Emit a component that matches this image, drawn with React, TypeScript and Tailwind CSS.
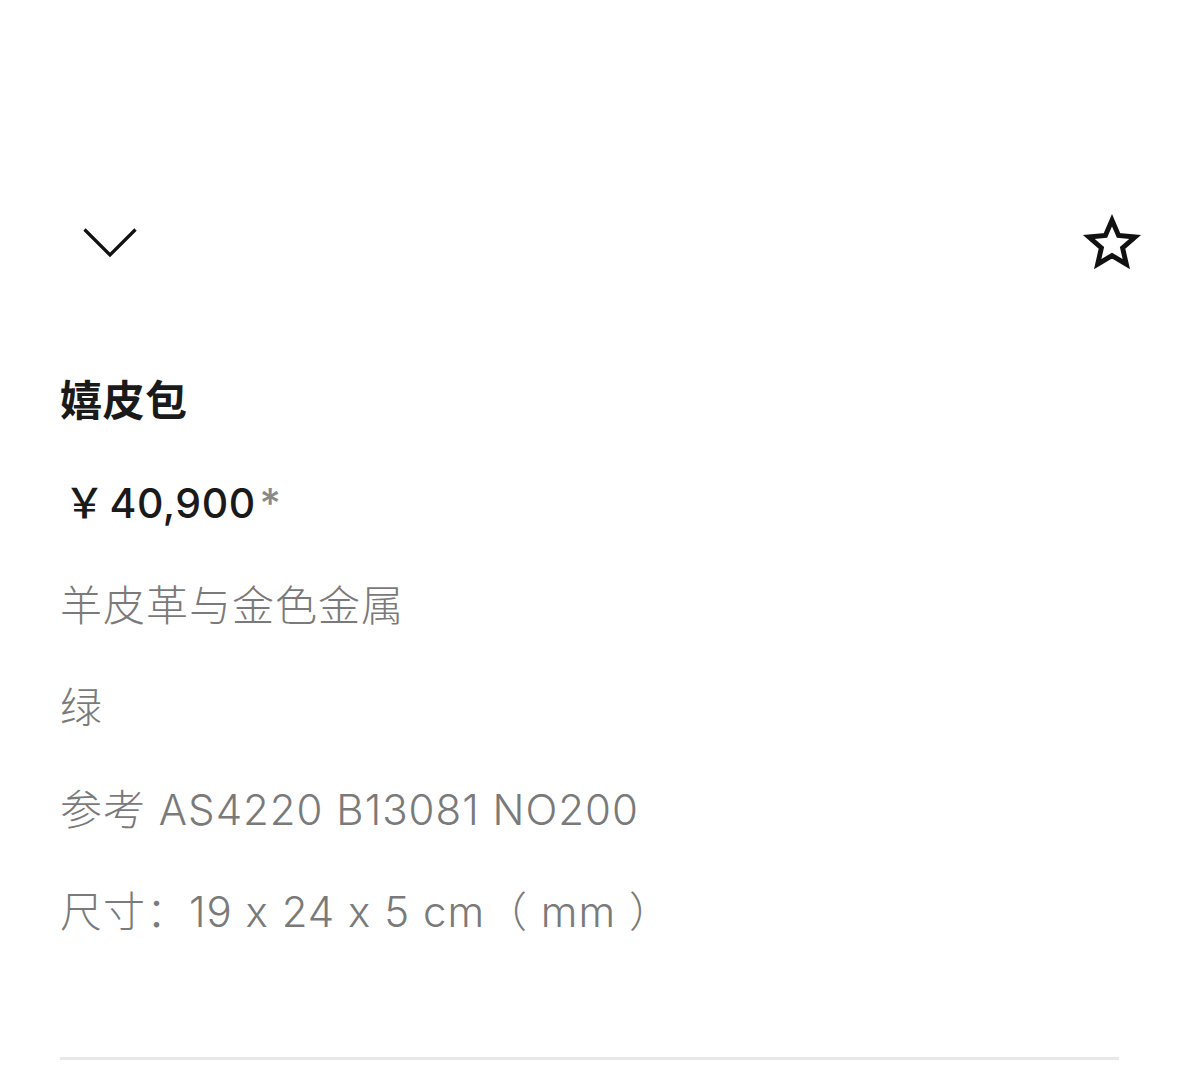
const details = ['羊皮革与金色金属', '绿', '参考 AS4220 B13081 NO200', '尺寸：19 x 24 x 5 cm（ mm ）'];

export default function App() {
  return (
    <div className="min-h-[1083px] w-full bg-white font-['Inter','Noto_Sans_CJK_SC',sans-serif]">
      <div className="flex h-[60px] items-center justify-between pl-[82px] pr-[35px] pt-[213px] box-content">
        <svg viewBox="0 0 56 34" className="h-[34px] w-[56px]" fill="none" stroke="#111" strokeWidth="3.2">
          <path d="M2.5 3.5L28 29L53.5 3.5" />
        </svg>
        <svg viewBox="0 0 24 24" className="h-[62px] w-[62px]" fill="none" stroke="#111" strokeWidth="1.9" strokeLinejoin="miter">
          <path d="M12 3.2l2.55 5.9 6.4.58-4.85 4.22 1.45 6.27L12 16.86l-5.55 3.3 1.45-6.27L3.05 9.68l6.4-.58z" />
        </svg>
      </div>

      <div className="mt-[76px] px-[60px]">
        <h1 className="text-[42px] font-bold leading-[103px] tracking-[0.5px] text-[#1a1a1a]">嬉皮包</h1>
        <p className="text-[41px] font-medium leading-[103px] tracking-[0.5px] text-[#1a1a1a]">
          <span className="ml-[4px] mr-[4px]">￥</span>40,900<span className="ml-[4px] text-[#8a8a8a]">*</span>
        </p>
        {details.map((line) => (
          <p key={line} className="text-[42px] font-light leading-[102px] tracking-[1px] text-[#7a7a7a]">
            {line}
          </p>
        ))}
        <div className="mt-[94px] h-[3px] w-[1059px] bg-[#e8e8e8]" />
      </div>
    </div>
  );
}
